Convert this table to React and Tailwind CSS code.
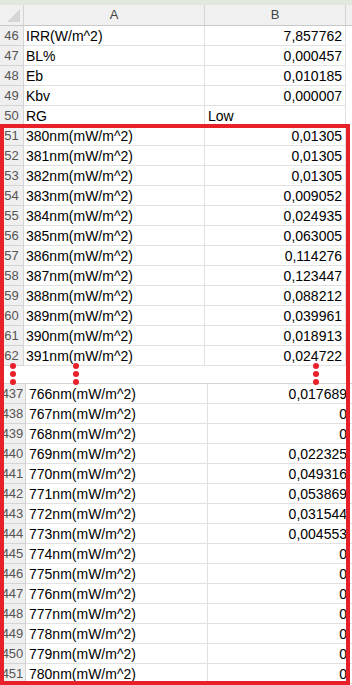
const topRows = [
	{ n: 46, a: "IRR(W/m^2)", b: "7,857762" },
	{ n: 47, a: "BL%", b: "0,000457" },
	{ n: 48, a: "Eb", b: "0,010185" },
	{ n: 49, a: "Kbv", b: "0,000007" },
	{ n: 50, a: "RG", b: "Low", left: true },
	{ n: 51, a: "380nm(mW/m^2)", b: "0,01305" },
	{ n: 52, a: "381nm(mW/m^2)", b: "0,01305" },
	{ n: 53, a: "382nm(mW/m^2)", b: "0,01305" },
	{ n: 54, a: "383nm(mW/m^2)", b: "0,009052" },
	{ n: 55, a: "384nm(mW/m^2)", b: "0,024935" },
	{ n: 56, a: "385nm(mW/m^2)", b: "0,063005" },
	{ n: 57, a: "386nm(mW/m^2)", b: "0,114276" },
	{ n: 58, a: "387nm(mW/m^2)", b: "0,123447" },
	{ n: 59, a: "388nm(mW/m^2)", b: "0,088212" },
	{ n: 60, a: "389nm(mW/m^2)", b: "0,039961" },
	{ n: 61, a: "390nm(mW/m^2)", b: "0,018913" },
	{ n: 62, a: "391nm(mW/m^2)", b: "0,024722" },
];

const lowValues = [
	"0,017689", "0", "0", "0,022325", "0,049316", "0,053869", "0,031544",
	"0,004553", "0", "0", "0", "0", "0", "0", "0",
];

const bottomRows = lowValues.map((b, i) => ({
	n: 437 + i,
	a: `${766 + i}nm(mW/m^2)`,
	b,
}));

const Dots = ({ className }) => (
	<div className={`absolute top-[363px] flex flex-col gap-[2px] ${className}`}>
		<span className="w-[6px] h-[6px] rounded-full bg-[#e8202a]" />
		<span className="w-[6px] h-[6px] rounded-full bg-[#e8202a]" />
		<span className="w-[6px] h-[6px] rounded-full bg-[#e8202a]" />
	</div>
);

export default function App() {
	return (
		<div
			className="relative w-[352px] h-[685px] overflow-hidden bg-white text-black"
			style={{ fontFamily: '"Liberation Sans", Arial, sans-serif' }}
		>
			{/* ribbon edge */}
			<div className="h-[5px] bg-[#e2e9dc]" />

			{/* column headers */}
			<div className="flex h-[21px] bg-[#f0f0f0] border-b border-[#c8c8c8] text-[13px] text-[#444]">
				<div className="w-[24px] border-r border-[#d4d4d4] flex items-end justify-end p-[3px]">
					<svg width="13" height="13" viewBox="0 0 13 13">
						<polygon points="13,0 13,13 0,13" fill="#d6d6d6" />
					</svg>
				</div>
				<div className="w-[181px] border-r border-[#d4d4d4] flex items-center justify-center">A</div>
				<div className="w-[141px] border-r border-[#d4d4d4] flex items-center justify-center">B</div>
				<div className="flex-1" />
			</div>

			{/* rows 46 - 62 */}
			{topRows.map((r) => (
				<div key={r.n} className="flex h-[20px] text-[14px] leading-[20px]">
					<div className="w-[24px] bg-[#efefef] border-r border-b border-[#d4d4d4] text-center text-[13px] text-[#555]">
						{r.n}
					</div>
					<div className="w-[181px] border-r border-b border-[#e1e1e1] pl-[2px] whitespace-nowrap">
						{r.a}
					</div>
					<div
						className={`w-[141px] border-r border-b border-[#e1e1e1] whitespace-nowrap ${
							r.left ? "text-left pl-[3px]" : "text-right pr-[3px]"
						}`}
					>
						{r.b}
					</div>
					<div className="flex-1" />
				</div>
			))}

			{/* gap between the two cuts */}
			<div className="h-[17px]" />

			{/* rows 437 - 451 */}
			<div className="border-t border-[#d4d4d4]">
				{bottomRows.map((r) => (
					<div key={r.n} className="flex h-[20px] text-[14px] leading-[20px]">
						<div className="w-[26px] bg-[#efefef] border-r border-b border-[#d4d4d4] text-center text-[13px] text-[#555]">
							{r.n}
						</div>
						<div className="w-[182px] border-r border-b border-[#e1e1e1] pl-[3px] whitespace-nowrap">
							{r.a}
						</div>
						<div className="flex-1 border-b border-[#e1e1e1] text-right pr-[5px] whitespace-nowrap">
							{r.b}
						</div>
					</div>
				))}
			</div>

			{/* annotation overlay */}
			<Dots className="left-[10px]" />
			<Dots className="left-[73px]" />
			<Dots className="left-[313px]" />
			<div className="absolute left-0 top-[124px] w-[350px] bottom-0 border-4 border-[#e8202a] pointer-events-none" />
		</div>
	);
}
